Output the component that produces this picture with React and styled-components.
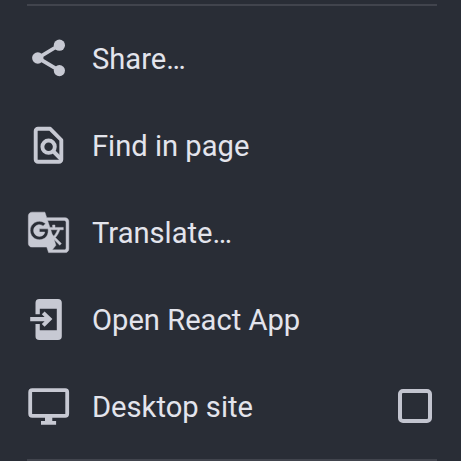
import React from "react";
import styled, { createGlobalStyle } from "styled-components";

const GlobalStyle = createGlobalStyle`
  body {
    margin: 0;
    background: #292d36;
    overflow: hidden;
  }
`;

const Menu = styled.main`
  box-sizing: border-box;
  width: 461px;
  height: 461px;
  padding: 4px 24px 0 26px;
  display: flex;
  flex-direction: column;
  background: #292d36;
  color: #e3e4ec;
  font-family: Roboto, sans-serif;
`;

const Divider = styled.hr`
  flex: none;
  width: 410px;
  height: 2px;
  margin: 0 0 0 1px;
  border: 0;
  background: #41444d;
`;

const Items = styled.ul`
  list-style: none;
  margin: 30px 0 31px;
  padding: 0;
  display: flex;
  flex-direction: column;
  gap: 43px;
`;

const Item = styled.li`
  display: flex;
  align-items: center;
  height: 44px;
`;

const Icon = styled.svg`
  flex: none;
  width: 44px;
  height: 44px;
  margin-right: 22px;
  color: #c7c9d3;
  fill: currentColor;
`;

const Label = styled.span`
  flex: 1;
  font-size: 29.15px;
  line-height: 44px;
  white-space: nowrap;
  padding-top: 2px;
`;

const Checkbox = styled.span`
  box-sizing: border-box;
  width: 34px;
  height: 34px;
  margin-right: 5px;
  border: 4px solid #c2c4cf;
  border-radius: 5px;
`;

const ShareIcon = () => (
  <Icon viewBox="0 0 44 44">
    <path d="M33.4 9 12 22l21.4 12.7" fill="none" stroke="currentColor" strokeWidth="3.8" />
    <circle cx="33.4" cy="9.2" r="5.6" />
    <circle cx="11.8" cy="22" r="5.7" />
    <circle cx="33.4" cy="34.6" r="5.6" />
  </Icon>
);

const FindIcon = () => (
  <Icon viewBox="0 0 44 44">
    <g fill="none" stroke="currentColor" strokeWidth="3.9" strokeLinejoin="round">
      <path d="M12 5.8h12.2L35.3 17v19.5a2.3 2.3 0 0 1-2.3 2.3H12a2.3 2.3 0 0 1-2.3-2.3V8.1A2.3 2.3 0 0 1 12 5.8Z" />
      <circle cx="22.6" cy="23.7" r="6.2" />
      <path d="m27 28 8 8" />
    </g>
  </Icon>
);

const TranslateIcon = () => (
  <Icon viewBox="0 0 44 44">
    <path
      transform="translate(0.5 0.3) scale(1.84)"
      stroke="currentColor"
      strokeWidth="0.25"
      d="M21 4H11l-1-3H3c-1.1 0-2 .9-2 2v15c0 1.1.9 2 2 2h8l1 3h9c1.1 0 2-.9 2-2V6c0-1.1-.9-2-2-2zM7 16c-2.76 0-5-2.24-5-5s2.24-5 5-5c1.35 0 2.48.5 3.35 1.3L9.03 8.57c-.38-.36-1.04-.78-2.03-.78-1.74 0-3.15 1.44-3.15 3.21S5.26 14.21 7 14.21c2.01 0 2.84-1.44 2.92-2.41H7v-1.71h4.68c.07.31.12.61.12 1.02C11.8 13.97 9.89 16 7 16zm6.17-5.42h3.7c-.43 1.25-1.11 2.43-2.05 3.47-.31-.35-.6-.72-.86-1.1l-.79-2.37zm8.33 9.92c0 .55-.45 1-1 1H14l2-2.5-1.04-3.1 3.1 3.1.92-.92-3.3-3.25.02-.02c1.13-1.25 1.93-2.69 2.4-4.22H20v-1.3h-4.53V8h-1.29v1.29h-1.44L11.46 5.5h9.04c.55 0 1 .45 1 1v14z"
    />
  </Icon>
);

const OpenAppIcon = () => (
  <Icon viewBox="0 0 44 44">
    <path d="M13.3 2H32a3.8 3.8 0 0 1 3.8 3.8v33.4A3.8 3.8 0 0 1 32 43H13.3a3.8 3.8 0 0 1-3.8-3.8V27h4.3v6.2h17V11.8h-17v5.4H9.5V5.8A3.8 3.8 0 0 1 13.3 2Z" />
    <path d="M4.2 20H18.6l-2.8-2.8 2.8-2.8 7.8 7.7-7.8 7.7-2.8-2.8 2.8-2.8H4.2Z" />
  </Icon>
);

const DesktopIcon = () => (
  <Icon viewBox="0 0 44 44">
    <rect x="4.2" y="6.2" width="37" height="25.6" rx="2" fill="none" stroke="currentColor" strokeWidth="3.8" />
    <path d="M19 33h7.3v4h3.8v3.7H15V37h4Z" />
  </Icon>
);

const entries = [
  { label: "Share…", Glyph: ShareIcon },
  { label: "Find in page", Glyph: FindIcon },
  { label: "Translate…", Glyph: TranslateIcon },
  { label: "Open React App", Glyph: OpenAppIcon },
  { label: "Desktop site", Glyph: DesktopIcon, checkable: true },
];

export default function App() {
  return (
    <>
      <GlobalStyle />
      <Menu>
        <Divider />
        <Items>
          {entries.map(({ label, Glyph, checkable }) => (
            <Item key={label}>
              <Glyph />
              <Label>{label}</Label>
              {checkable && <Checkbox role="checkbox" aria-checked="false" aria-label={label} />}
            </Item>
          ))}
        </Items>
        <Divider />
      </Menu>
    </>
  );
}
